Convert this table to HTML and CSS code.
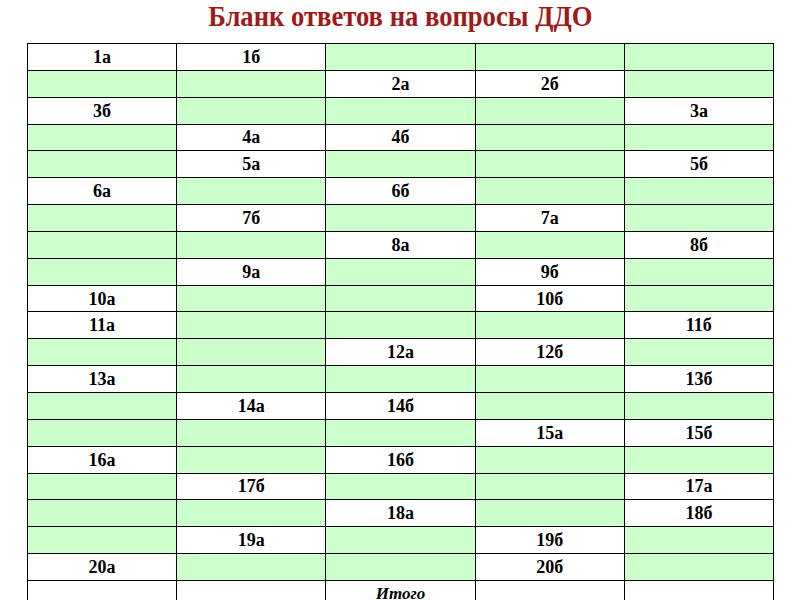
FILE: index.html
```html
<!DOCTYPE html>
<html lang="ru">
<head>
<meta charset="utf-8">
<title>Бланк ответов на вопросы ДДО</title>
<link rel="stylesheet" href="styles.css">
</head>
<body>
<h1 class="title"><span class="title-text">Бланк ответов на вопросы ДДО</span></h1>
<table class="sheet">
<colgroup><col><col><col><col><col></colgroup>
<tbody>
<tr><td>1а</td><td>1б</td><td class="g"></td><td class="g"></td><td class="g"></td></tr>
<tr><td class="g"></td><td class="g"></td><td>2а</td><td>2б</td><td class="g"></td></tr>
<tr><td>3б</td><td class="g"></td><td class="g"></td><td class="g"></td><td>3а</td></tr>
<tr><td class="g"></td><td>4а</td><td>4б</td><td class="g"></td><td class="g"></td></tr>
<tr><td class="g"></td><td>5а</td><td class="g"></td><td class="g"></td><td>5б</td></tr>
<tr><td>6а</td><td class="g"></td><td>6б</td><td class="g"></td><td class="g"></td></tr>
<tr><td class="g"></td><td>7б</td><td class="g"></td><td>7а</td><td class="g"></td></tr>
<tr><td class="g"></td><td class="g"></td><td>8а</td><td class="g"></td><td>8б</td></tr>
<tr><td class="g"></td><td>9а</td><td class="g"></td><td>9б</td><td class="g"></td></tr>
<tr><td>10а</td><td class="g"></td><td class="g"></td><td>10б</td><td class="g"></td></tr>
<tr><td>11а</td><td class="g"></td><td class="g"></td><td class="g"></td><td>11б</td></tr>
<tr><td class="g"></td><td class="g"></td><td>12а</td><td>12б</td><td class="g"></td></tr>
<tr><td>13а</td><td class="g"></td><td class="g"></td><td class="g"></td><td>13б</td></tr>
<tr><td class="g"></td><td>14а</td><td>14б</td><td class="g"></td><td class="g"></td></tr>
<tr><td class="g"></td><td class="g"></td><td class="g"></td><td>15а</td><td>15б</td></tr>
<tr><td>16а</td><td class="g"></td><td>16б</td><td class="g"></td><td class="g"></td></tr>
<tr><td class="g"></td><td>17б</td><td class="g"></td><td class="g"></td><td>17а</td></tr>
<tr><td class="g"></td><td class="g"></td><td>18а</td><td class="g"></td><td>18б</td></tr>
<tr><td class="g"></td><td>19а</td><td class="g"></td><td>19б</td><td class="g"></td></tr>
<tr><td>20а</td><td class="g"></td><td class="g"></td><td>20б</td><td class="g"></td></tr>
<tr class="total"><td></td><td></td><td class="it">Итого</td><td></td><td></td></tr>
</tbody>
</table>
</body>
</html>
```
FILE: styles.css
```css
html, body {
  margin: 0;
  padding: 0;
  background: #ffffff;
}
body {
  font-family: "Liberation Serif", "Times New Roman", serif;
  color: #000;
  overflow: hidden;
}
.title {
  margin: 0;
  height: 43px;
  text-align: center;
  font-size: 29px;
  line-height: 32px;
  padding-top: 0;
  box-sizing: border-box;
  color: #a11a1a;
  font-weight: bold;
}
.title-text {
  display: inline-block;
  transform: scaleX(0.918);
  transform-origin: center;
}
.sheet {
  margin-left: 27px;
  width: 747px;
  border-collapse: collapse;
  table-layout: fixed;
}
.sheet td {
  border: 1px solid #000;
  height: 25.85px;
  padding: 0;
  text-align: center;
  vertical-align: middle;
  font-size: 18px;
  font-weight: bold;
  line-height: 20px;
  background: #fff;
}
.sheet td.g {
  background: #ccffcc;
}
.sheet td.it {
  font-style: italic;
  font-size: 17px;
  vertical-align: top;
  padding-top: 3px;
}
```
